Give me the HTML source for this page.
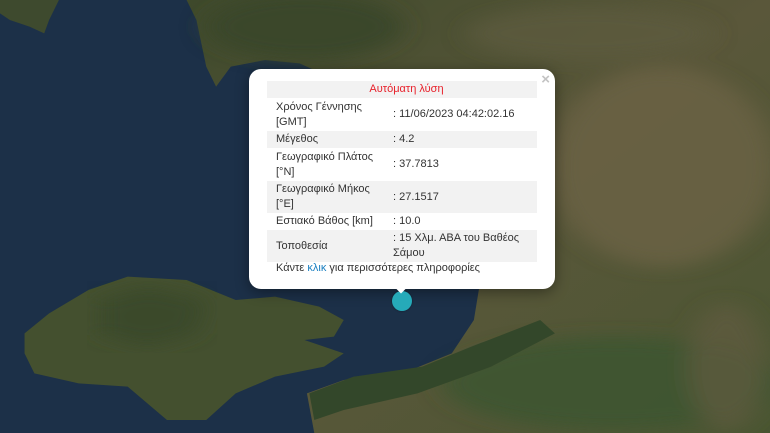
<!DOCTYPE html>
<html style="overflow:hidden;width:770px;height:433px"><head><meta charset="utf-8"><style>
html,body{overflow:hidden}
body{margin:0;width:770px;height:433px;overflow:hidden;background:#1c3048;font-family:"Liberation Sans",sans-serif;position:relative}
svg{position:absolute;left:0;top:0}
.pop{position:absolute;left:249px;top:69px;width:306px;height:220px;background:#fff;border-radius:12px;box-shadow:0 3px 14px rgba(0,0,0,.4)}
.tip{position:absolute;left:393px;top:286px;width:16px;height:10px;overflow:hidden}
.tip:after{content:"";position:absolute;left:2px;top:-7px;width:12px;height:12px;background:#fff;transform:rotate(45deg)}
.x{position:absolute;right:5px;top:2px;color:#c3c3c3;font-size:15px;font-weight:bold}
table{position:absolute;left:18px;top:12px;width:270px;border-collapse:collapse;font-size:11px;color:#333;line-height:15px}
td{padding:1px 0 1px 9px;vertical-align:middle}
tr.g{background:#f2f2f2}
td.v{padding-left:0}
.h{color:#e8202a;text-align:center;height:14px}
.f{position:absolute;left:27px;top:193px;font-size:11px;color:#333}
.f span{color:#1a7fc1}
.m{position:absolute;left:392px;top:291px;width:20px;height:20px;border-radius:50%;background:#26aab9;box-shadow:0 0 2px rgba(0,0,0,.4)}
</style></head><body>
<svg width="770" height="433" viewBox="0 0 1568 1299" preserveAspectRatio="none" style="overflow:hidden">
<defs>
<linearGradient id="ml" x1="0" y1="0" x2="1" y2="1"><stop offset="0" stop-color="#3f4a2c"/><stop offset=".5" stop-color="#5a573a"/><stop offset="1" stop-color="#4a5632"/></linearGradient>
<filter id="bl"><feGaussianBlur stdDeviation="25"/></filter>
</defs>
<rect width="1568" height="1299" fill="#1c3048"/>
<path d="M380 0H1568V1299H640L625 1180 700 1140 820 1120 920 1060 965 960 975 870 1000 700 960 400 700 230 640 210 610 190 540 180 470 200 440 260 420 200 400 60Z" fill="url(#ml)"/>
<g filter="url(#bl)">
<ellipse cx="1350" cy="500" rx="230" ry="300" fill="#6c6344" opacity=".8"/>
<ellipse cx="1250" cy="1150" rx="350" ry="140" fill="#3f5530" opacity=".9"/>
<ellipse cx="1480" cy="1100" rx="80" ry="190" fill="#5e5a40" opacity=".8"/>
<ellipse cx="620" cy="80" rx="200" ry="100" fill="#3a4629"/>
<ellipse cx="1200" cy="100" rx="250" ry="80" fill="#5e5c3e" opacity=".7"/>
</g>
<path d="M0 0H120L100 60 90 100 60 80 20 60 0 40Z" fill="#3e4a2e"/>
<path d="M50 1000 100 940 180 870 260 830 380 840 480 900 560 890 650 920 700 960 680 1010 620 1020 700 1060 660 1100 560 1130 480 1180 420 1260 340 1260 260 1160 160 1150 70 1120 50 1060Z" fill="#44502f"/>
<path d="M200 900 300 860 420 900 400 1000 300 1040 200 1000Z" fill="#3b4a2b" filter="url(#bl)"/>
<path d="M630 1180 720 1130 860 1100 960 1040 1100 960 1130 1000 1000 1100 850 1180 700 1230 640 1260Z" fill="#33472a"/>
</svg>
<div class="pop"><div class="x">×</div>
<table>
<tr class="g"><td colspan="2" class="h">Αυτόματη λύση</td></tr>
<tr style="height:33px"><td>Χρόνος Γέννησης<br>[GMT]</td><td class="v">: 11/06/2023 04:42:02.16</td></tr>
<tr class="g" style="height:17px"><td>Μέγεθος</td><td class="v">: 4.2</td></tr>
<tr style="height:33px"><td>Γεωγραφικό Πλάτος<br>[°N]</td><td class="v">: 37.7813</td></tr>
<tr class="g" style="height:31px"><td>Γεωγραφικό Μήκος<br>[°E]</td><td class="v">: 27.1517</td></tr>
<tr style="height:17px"><td style="width:117px">Εστιακό Βάθος [km]</td><td class="v">: 10.0</td></tr>
<tr class="g" style="height:32px"><td>Τοποθεσία</td><td class="v">: 15 Χλμ. ΑΒΑ του Βαθέος<br>Σάμου</td></tr>
</table>
<div class="f">Κάντε <span>κλικ</span> για περισσότερες πληροφορίες</div>
</div>
<div class="m"></div>
<div class="tip"></div>
</body></html>
